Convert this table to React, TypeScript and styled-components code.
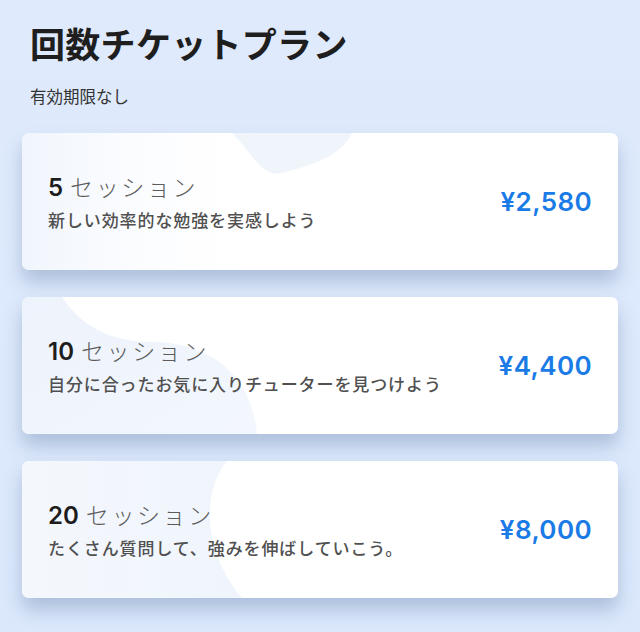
import React from "react";
import styled, { createGlobalStyle } from "styled-components";

const Global = createGlobalStyle`
  html, body { margin: 0; padding: 0; }
  body {
    background: #dde9fc;
    font-family: "Noto Sans CJK JP", "Noto Sans", sans-serif;
    width: 640px;
    height: 632px;
    overflow: hidden;
  }
`;

const Page = styled.div`
  width: 640px;
  height: 632px;
  box-sizing: border-box;
  padding: 18px 22px 0 22px;
  background: linear-gradient(180deg, #dfeafc 0%, #dbe8fc 100%);
`;

const Title = styled.h1`
  margin: 0 0 0 8px;
  font-size: 35px;
  line-height: 50px;
  font-weight: 700;
  color: #1e1e1e;
  letter-spacing: 0.3px;
`;

const Subtitle = styled.p`
  margin: 16px 0 0 8px;
  font-size: 16.5px;
  line-height: 24px;
  color: #333;
`;

const List = styled.div`
  margin-top: 25px;
  display: flex;
  flex-direction: column;
  gap: 27px;
`;

const Card = styled.div`
  position: relative;
  height: 137px;
  border-radius: 7px;
  background: #ffffff;
  box-shadow: 0 12px 18px rgba(110, 135, 175, 0.42);
  overflow: hidden;
  display: flex;
  align-items: center;
  justify-content: space-between;
  padding: 0 26px 0 26px;
`;

const Deco = styled.svg`
  position: absolute;
  inset: 0;
  width: 100%;
  height: 100%;
  pointer-events: none;
`;

const Info = styled.div`
  position: relative;
  display: flex;
  flex-direction: column;
  gap: 4px;
`;

const Sessions = styled.div`
  display: flex;
  align-items: baseline;
  gap: 7px;
  line-height: 30px;
`;

const Count = styled.span`
  font-family: "Inter", "Noto Sans", sans-serif;
  font-size: 24px;
  font-weight: 600;
  color: #1d1d1d;
`;

const Unit = styled.span`
  font-size: 23px;
  font-weight: 300;
  color: #5c5c5c;
  letter-spacing: 2.6px;
`;

const Desc = styled.div`
  font-size: 17px;
  font-weight: 500;
  color: #505050;
  letter-spacing: 0.9px;
  line-height: 26px;
`;

const Price = styled.div<{ $shift: number }>`
  position: relative;
  font-family: "Inter", "Noto Sans", sans-serif;
  font-size: 26px;
  font-weight: 600;
  letter-spacing: 0.4px;
  color: #1b7be6;
  margin-top: ${(p) => p.$shift}px;
`;

const plans = [
  { n: 5, desc: "新しい効率的な勉強を実感しよう", price: "¥2,580", deco: 0 },
  { n: 10, desc: "自分に合ったお気に入りチューターを見つけよう", price: "¥4,400", deco: 1 },
  { n: 20, desc: "たくさん質問して、強みを伸ばしていこう。", price: "¥8,000", deco: 2 },
];

function Decoration({ kind }: { kind: number }) {
  if (kind === 0) {
    return (
      <Deco viewBox="0 0 596 137" preserveAspectRatio="none">
        <defs>
          <linearGradient id="g0" x1="0" y1="0" x2="1" y2="0">
            <stop offset="0" stopColor="#eaf1fc" />
            <stop offset="1" stopColor="#ffffff" stopOpacity="0" />
          </linearGradient>
        </defs>
        <path d="M0 0 H210 C230 40 200 100 250 137 H0 Z" fill="url(#g0)" opacity="0.7" />
        <path d="M210 0 H330 C320 20 300 30 260 40 C240 45 230 20 210 0 Z" fill="#f0f4fb" />
      </Deco>
    );
  }
  if (kind === 1) {
    return (
      <Deco viewBox="0 0 596 137" preserveAspectRatio="none">
        <defs>
          <linearGradient id="g1" x1="0" y1="0" x2="1" y2="1">
            <stop offset="0" stopColor="#e9f0fb" />
            <stop offset="1" stopColor="#f0f5fd" />
          </linearGradient>
        </defs>
        <path d="M0 0 H40 C60 30 90 45 130 45 C190 45 230 80 235 137 H0 Z" fill="url(#g1)" opacity="0.8" />
      </Deco>
    );
  }
  return (
    <Deco viewBox="0 0 596 137" preserveAspectRatio="none">
      <defs>
        <linearGradient id="g2" x1="0" y1="0" x2="1" y2="0">
          <stop offset="0" stopColor="#f4f7fc" />
          <stop offset="1" stopColor="#f0f5fd" />
        </linearGradient>
      </defs>
      <path d="M0 0 H205 C180 30 180 90 220 137 H0 Z" fill="url(#g2)" />
    </Deco>
  );
}

export default function App() {
  return (
    <>
      <Global />
      <Page>
        <Title>回数チケットプラン</Title>
        <Subtitle>有効期限なし</Subtitle>
        <List>
          {plans.map((p) => (
            <Card key={p.n}>
              <Decoration kind={p.deco} />
              <Info>
                <Sessions>
                  <Count>{p.n}</Count>
                  <Unit>セッション</Unit>
                </Sessions>
                <Desc>{p.desc}</Desc>
              </Info>
              <Price $shift={-1}>{p.price}</Price>
            </Card>
          ))}
        </List>
      </Page>
    </>
  );
}
